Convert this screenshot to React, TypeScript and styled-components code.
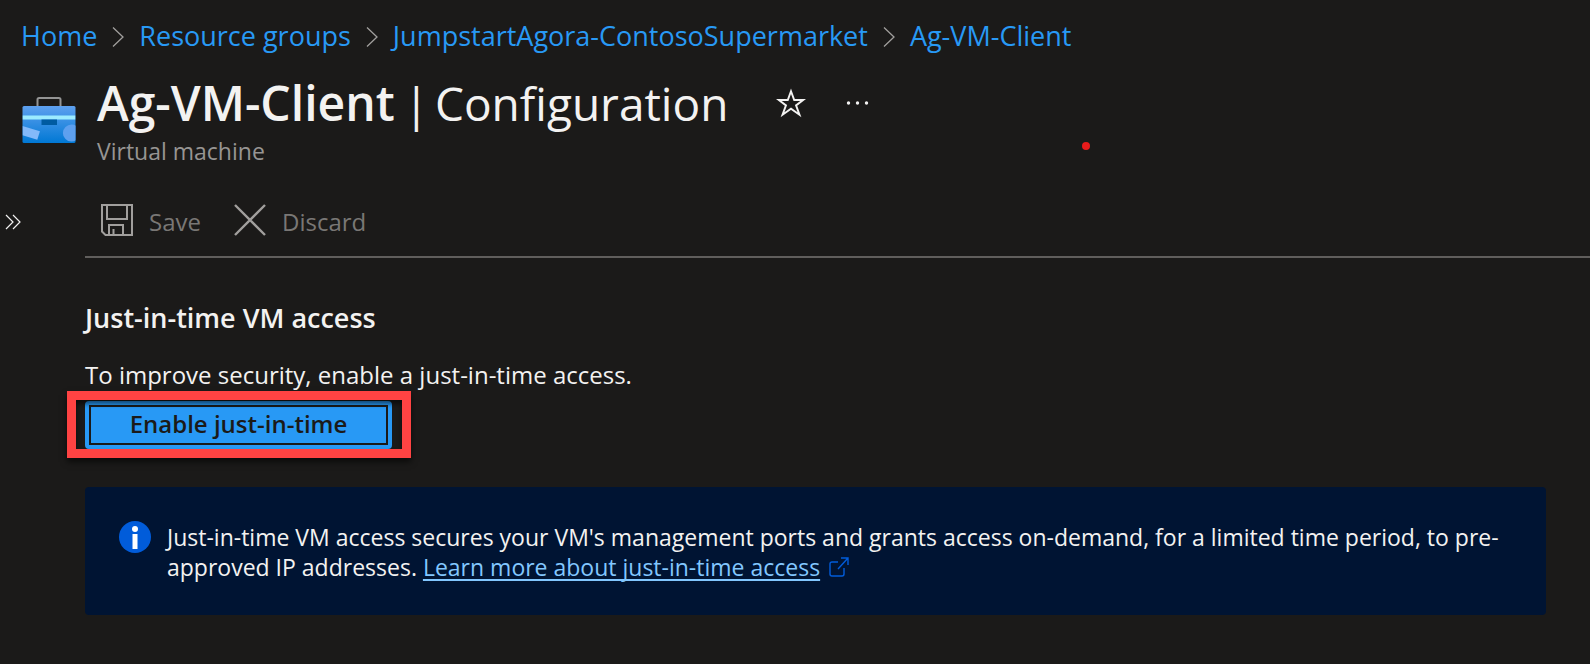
import React from "react";
import styled, { createGlobalStyle } from "styled-components";

const GlobalStyle = createGlobalStyle`
  *, *::before, *::after { box-sizing: border-box; }
  html, body { margin: 0; background: #1b1a19; }
  body {
    color: #f3f2f1;
    font-family: "Open Sans", "Noto Sans", sans-serif;
    font-size: 24px;
    line-height: 32px;
  }
  button { font: inherit; color: inherit; background: none; border: 0; padding: 0; }
  svg { display: block; flex: none; }
`;

const Page = styled.div`
  min-height: 100vh;
  padding-bottom: 32px;
`;

const Breadcrumb = styled.ol`
  display: flex;
  align-items: center;
  margin: 0;
  padding: 18px 21px 0;
  list-style: none;
  font-size: 27px;
  line-height: 36px;
`;

const Crumb = styled.li`
  display: flex;
  align-items: center;
  white-space: nowrap;
`;

const CrumbLink = styled.a`
  color: #2899f5;
  text-decoration: none;
`;

const CrumbChevron = styled.svg`
  margin: 2px 15px 0;
`;

const Header = styled.header`
  position: relative;
  display: flex;
  gap: 21px;
  padding: 21px 22px 0;
`;

const HeaderIcon = styled.svg`
  margin-top: 22px;
`;

const TitleRow = styled.div`
  display: flex;
  align-items: center;
`;

const Title = styled.h1`
  display: flex;
  align-items: baseline;
  gap: 9px;
  margin: 0 48px 0 0;
  font-size: 48px;
  line-height: 56px;
  font-weight: 600;
  white-space: nowrap;
`;

const TitleSection = styled.span`
  display: flex;
  gap: 6px;
  font-size: 46px;
  font-weight: 400;
`;

const Subtitle = styled.div`
  margin-top: 5px;
  color: #979593;
  font-size: 23px;
  line-height: 30px;
`;

const IconButton = styled.button`
  display: flex;
  align-items: center;
  justify-content: center;
  margin-right: 40px;
`;

const PointerDot = styled.span`
  position: absolute;
  left: 1082px;
  top: 88px;
  width: 8px;
  height: 8px;
  border-radius: 50%;
  background: #e81b1b;
`;

const Body = styled.div`
  display: grid;
  grid-template-columns: 85px minmax(0, 1fr);
  margin-top: 38px;
`;

const Rail = styled.div`
  padding: 10px 0 0 5px;
`;

const Toolbar = styled.div`
  display: flex;
  gap: 33px;
  height: 54px;
  padding-left: 16px;
  border-bottom: 2px solid #605e5c;
`;

const ToolbarButton = styled.button`
  display: flex;
  gap: 16px;
  height: 36px;
  color: #797775;
  line-height: 36px;
`;

const Section = styled.section`
  padding: 42px 44px 0 0;
`;

const SectionTitle = styled.h2`
  margin: 0 0 23px;
  font-size: 27px;
  line-height: 36px;
  font-weight: 600;
`;

const Text = styled.p`
  margin: 0 0 10px;
`;

const Highlighted = styled.div`
  position: relative;
  width: fit-content;
  margin-bottom: 38px;

  &::after {
    content: "";
    position: absolute;
    inset: -10px -19px -9px -18px;
    border: 9px solid #ff4343;
    box-shadow: 0 4px 6px rgba(0, 0, 0, 0.6), inset 0 4px 5px rgba(0, 0, 0, 0.55);
    pointer-events: none;
  }
`;

const PrimaryButton = styled.button`
  display: block;
  width: 307px;
  height: 48px;
  padding: 4px;
  border-radius: 4px;
  background: #2899f5;
  color: #1b1a19;
  font-weight: 600;
`;

const FocusRing = styled.span`
  display: block;
  height: 40px;
  border: 2px solid #1b1a19;
  line-height: 34px;
`;

const InfoBox = styled.div`
  display: flex;
  gap: 16px;
  padding: 34px 34px 33px;
  border-radius: 4px;
  background: #001433;
  font-size: 23px;
  line-height: 30px;
`;

const InfoText = styled.p`
  margin: 0;
  padding-top: 1px;
`;

const InfoLink = styled.a`
  color: #82c7ff;
  text-decoration: underline;
  text-decoration-thickness: 2px;
  text-underline-offset: 3px;
  text-decoration-skip-ink: none;
`;

const ExternalIcon = styled.svg`
  display: inline-block;
  margin-left: 9px;
  vertical-align: -1px;
`;

const CRUMBS = ["Home", "Resource groups", "JumpstartAgora-ContosoSupermarket", "Ag-VM-Client"];

function ToolboxIcon() {
  return (
    <HeaderIcon width="54" height="46" viewBox="0 0 53 46" aria-hidden="true">
      <defs>
        <linearGradient id="case" x1="0" y1="0" x2="0" y2="1">
          <stop offset="0" stopColor="#5ea0ef" />
          <stop offset="1" stopColor="#0078d4" />
        </linearGradient>
        <clipPath id="caseClip">
          <rect y="9" width="53" height="37" rx="1.5" />
        </clipPath>
      </defs>
      <path d="M15 9.5V2.6Q15 1 16.6 1H36.4Q38 1 38 2.6V9.5" fill="none" stroke="#949494" strokeWidth="2" />
      <rect y="9" width="53" height="37" rx="1.5" fill="url(#case)" />
      <g clipPath="url(#caseClip)">
        <rect y="18.5" width="53" height="4" fill="#9cebff" />
        <rect x="19" y="22.5" width="15.5" height="5.5" fill="#005ba1" />
        <path d="M0 29L17.4 34.2L14.8 42.8L0 38.3Z" fill="#83b9f9" />
        <circle cx="49" cy="36" r="8.6" fill="#5ea0ef" />
      </g>
    </HeaderIcon>
  );
}

function SaveIcon() {
  return (
    <svg width="32" height="32" viewBox="0 0 32 32" fill="none" stroke="#a19f9d" strokeWidth="2" aria-hidden="true">
      <path d="M1 1H31V31H4.5L1 27.5Z" />
      <path d="M6 1V15H26V1" />
      <path d="M8 31V21H22V31M12.5 31V25" />
    </svg>
  );
}

function DiscardIcon() {
  return (
    <svg width="32" height="32" viewBox="0 0 32 32" fill="none" stroke="#a19f9d" strokeWidth="2.4" aria-hidden="true">
      <path d="M1 1L31 31M31 1L1 31" />
    </svg>
  );
}

export default function App() {
  return (
    <Page>
      <GlobalStyle />
      <nav aria-label="Breadcrumb">
        <Breadcrumb>
          {CRUMBS.map((name, index) => (
            <Crumb key={name}>
              {index > 0 && (
                <CrumbChevron width="12" height="20" viewBox="0 0 12 20" fill="none" stroke="#a19f9d" aria-hidden="true">
                  <path d="M1 0.5L11 10L1 19.5" strokeWidth="1.3" />
                </CrumbChevron>
              )}
              <CrumbLink href="#">{name}</CrumbLink>
            </Crumb>
          ))}
        </Breadcrumb>
      </nav>

      <Header>
        <ToolboxIcon />
        <div>
          <TitleRow>
            <Title>
              <span>Ag-VM-Client</span>
              <TitleSection>
                <span>|</span>
                <span>Configuration</span>
              </TitleSection>
            </Title>
            <IconButton aria-label="Add to favorites">
              <svg width="30" height="30" viewBox="0 0 28 28" fill="none" stroke="#f3f2f1" strokeWidth="1.8" aria-hidden="true">
                <path d="M14 3L17 11.2H25.4L18.7 16.2L21.9 25L14 19.4L6.1 25L9.3 16.2L2.6 11.2H11Z" />
              </svg>
            </IconButton>
            <IconButton aria-label="More options">
              <svg width="24" height="4" viewBox="0 0 24 4" fill="#f3f2f1" aria-hidden="true">
                <circle cx="2.5" cy="2" r="1.7" />
                <circle cx="11.5" cy="2" r="1.7" />
                <circle cx="20.5" cy="2" r="1.7" />
              </svg>
            </IconButton>
          </TitleRow>
          <Subtitle>Virtual machine</Subtitle>
        </div>
        <PointerDot />
      </Header>

      <Body>
        <Rail>
          <IconButton aria-label="Expand menu">
            <svg width="16" height="16" viewBox="0 0 16 16" fill="none" stroke="#f3f2f1" strokeWidth="1.2" aria-hidden="true">
              <path d="M1 1L8 8L1 15M8 1L15 8L8 15" />
            </svg>
          </IconButton>
        </Rail>
        <main>
          <Toolbar>
            <ToolbarButton disabled>
              <SaveIcon />
              Save
            </ToolbarButton>
            <ToolbarButton disabled>
              <DiscardIcon />
              Discard
            </ToolbarButton>
          </Toolbar>
          <Section>
            <SectionTitle>Just-in-time VM access</SectionTitle>
            <Text>To improve security, enable a just-in-time access.</Text>
            <Highlighted>
              <PrimaryButton>
                <FocusRing>Enable just-in-time</FocusRing>
              </PrimaryButton>
            </Highlighted>
            <InfoBox>
              <svg width="32" height="32" viewBox="0 0 32 32" aria-hidden="true">
                <circle cx="16" cy="16" r="16" fill="#015cda" />
                <circle cx="16" cy="8" r="3" fill="#fff" />
                <rect x="13.5" y="13" width="5" height="15" fill="#fff" />
              </svg>
              <InfoText>
                Just-in-time VM access secures your VM's management ports and grants access on-demand, for a limited
                time period, to pre-approved IP addresses. <InfoLink href="#">Learn more about just-in-time access</InfoLink>
                <ExternalIcon width="20" height="20" viewBox="0 0 20 20" fill="none" stroke="#015cda" strokeWidth="1.4" aria-hidden="true">
                  <path d="M9 5H3Q1 5 1 7V17Q1 19 3 19H13Q15 19 15 17V11" />
                  <path d="M12 1H19V8M19 1L9 12" />
                </ExternalIcon>
              </InfoText>
            </InfoBox>
          </Section>
        </main>
      </Body>
    </Page>
  );
}
